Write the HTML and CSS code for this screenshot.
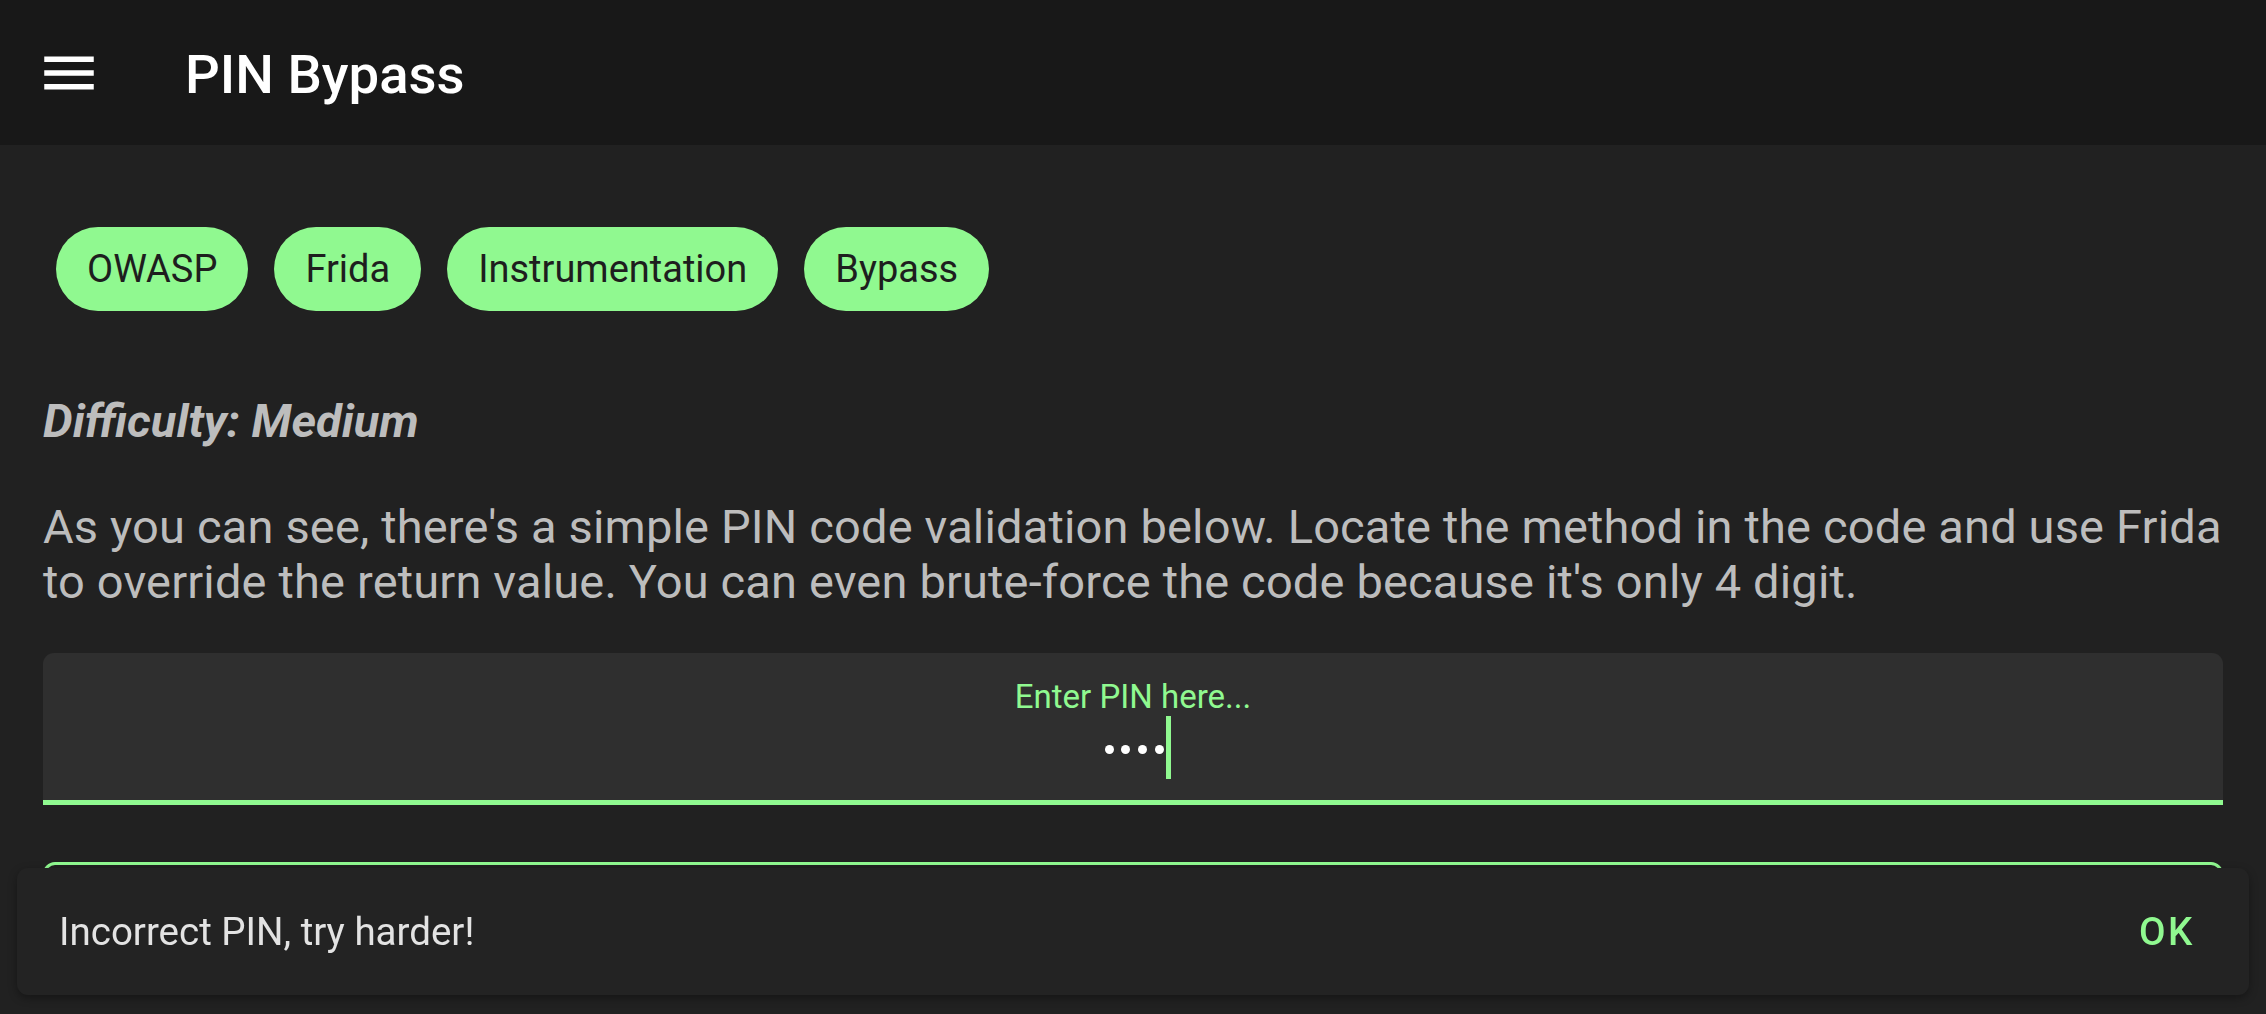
FILE: index.html
```html
<!DOCTYPE html>
<html lang="en">
<head>
<meta charset="utf-8">
<title>PIN Bypass</title>
<link rel="stylesheet" href="styles.css">
</head>
<body>
<header class="appbar">
  <svg class="menu-icon" viewBox="0 0 24 24" aria-hidden="true"><path d="M3 18h18v-2H3v2zm0-5h18v-2H3v2zm0-7v2h18V6H3z"/></svg>
  <h1 class="title">PIN Bypass</h1>
</header>
<main class="content">
  <div class="chips">
    <span class="chip">OWASP</span>
    <span class="chip">Frida</span>
    <span class="chip">Instrumentation</span>
    <span class="chip">Bypass</span>
  </div>
  <p class="difficulty">Difficulty: Medium</p>
  <p class="desc">As you can see, there's a simple PIN code validation below. Locate the method in the code and use Frida to override the return value. You can even brute-force the code because it's only 4 digit.</p>
  <div class="pin-field">
    <div class="pin-label">Enter PIN here...</div>
    <div class="pin-value">
      <span class="dot"></span><span class="dot"></span><span class="dot"></span><span class="dot"></span><span class="cursor"></span>
    </div>
  </div>
  <div class="submit-btn" aria-label="Submit"></div>
</main>
<div class="snackbar">
  <span class="snack-text">Incorrect PIN, try harder!</span>
  <span class="snack-action">OK</span>
</div>
</body>
</html>
```
FILE: styles.css
```css
html, body {
  margin: 0;
  padding: 0;
}
body {
  background: #212121;
  font-family: Roboto, "Noto Sans", "Liberation Sans", sans-serif;
  width: 2266px;
  height: 1014px;
  overflow: hidden;
}
.appbar {
  height: 145px;
  background: #181818;
  display: flex;
  align-items: center;
  padding-left: 36px;
  box-sizing: border-box;
}
.menu-icon {
  width: 66px;
  height: 66px;
  fill: #ffffff;
  flex: none;
}
.title {
  margin: 4px 0 0 83px;
  font-size: 54.5px;
  font-weight: 500;
  color: #ffffff;
  line-height: 63px;
}
.content {
  padding: 82px 43px 0 43px;
}
.chips {
  display: flex;
  gap: 26px;
  padding-left: 13px;
}
.chip {
  height: 84px;
  border-radius: 42px;
  background: #90f990;
  color: #1e1e1e;
  font-size: 38px;
  display: inline-flex;
  align-items: center;
  padding: 0 31px;
}
.difficulty {
  margin: 82px 0 0 0;
  font-size: 47px;
  line-height: 56px;
  font-weight: 700;
  font-style: italic;
  color: #bdbdbd;
}
.desc {
  margin: 50px -20px 0 0;
  font-size: 47px;
  letter-spacing: 0.16px;
  line-height: 55px;
  color: #bdbdbd;
}
.pin-field {
  margin-top: 44px;
  height: 152px;
  box-sizing: border-box;
  background: #2f2f2f;
  border-radius: 11px 11px 0 0;
  border-bottom: 5px solid #90f990;
  padding-top: 24px;
  text-align: center;
}
.pin-label {
  font-size: 33px;
  line-height: 39px;
  color: #90f990;
}
.pin-value {
  display: flex;
  justify-content: center;
  align-items: center;
  height: 63px;
  padding-left: 10px;
}
.dot {
  width: 9px;
  height: 9px;
  border-radius: 50%;
  background: #ffffff;
  margin-right: 7.7px;
  margin-top: 3px;
}
.cursor {
  width: 5px;
  height: 63px;
  background: #90f990;
  margin-left: -5px;
}
.submit-btn {
  margin-top: 57px;
  height: 132px;
  box-sizing: border-box;
  border: 3px solid #90f990;
  border-radius: 12px;
}
.snackbar {
  position: fixed;
  left: 17px;
  right: 17px;
  bottom: 19px;
  height: 127px;
  box-sizing: border-box;
  background: #232323;
  border-radius: 11px;
  box-shadow: 0 3px 8px rgba(0, 0, 0, 0.35);
  display: flex;
  align-items: center;
  justify-content: space-between;
  padding: 0 54px 0 42px;
}
.snack-text {
  font-size: 38.5px;
  color: #e3e3e3;
}
.snack-action {
  font-size: 38.5px;
  font-weight: 500;
  letter-spacing: 2.6px;
  color: #90f990;
}
```
